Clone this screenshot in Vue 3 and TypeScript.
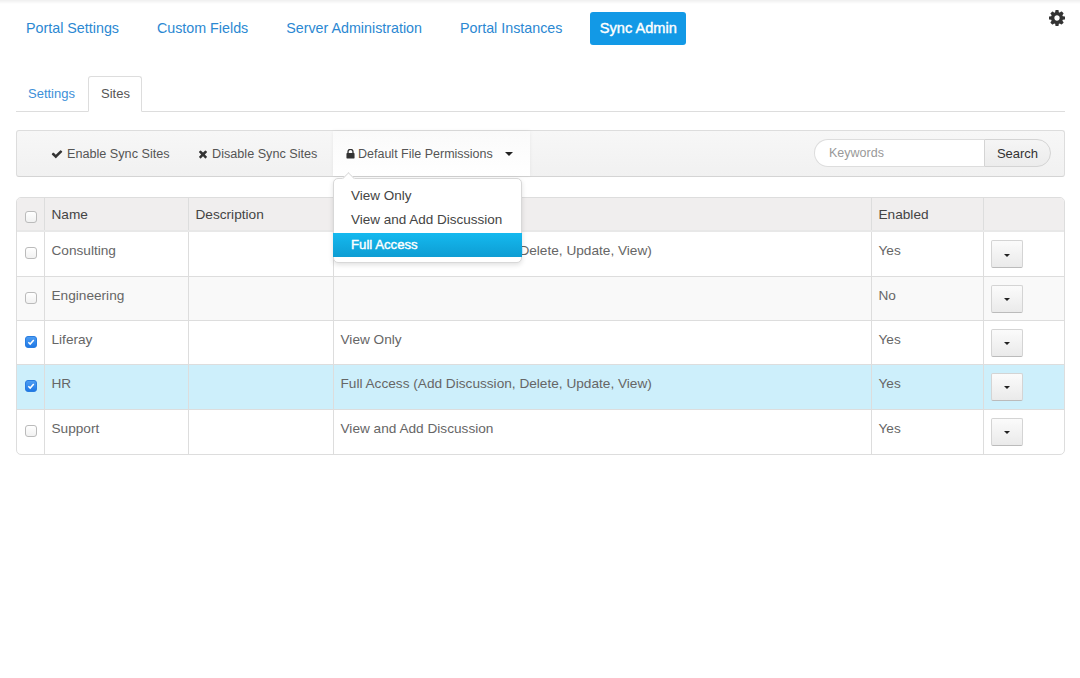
<script setup lang="ts">
const navItems = ['Portal Settings', 'Custom Fields', 'Server Administration', 'Portal Instances', 'Sync Admin']
const rows = [
  { name: 'Consulting', desc: '', perm: 'Full Access (Add Discussion, Delete, Update, View)', enabled: 'Yes', checked: false, cls: 'h45' },
  { name: 'Engineering', desc: '', perm: '', enabled: 'No', checked: false, cls: 'h44 alt' },
  { name: 'Liferay', desc: '', perm: 'View Only', enabled: 'Yes', checked: true, cls: 'h44' },
  { name: 'HR', desc: '', perm: 'Full Access (Add Discussion, Delete, Update, View)', enabled: 'Yes', checked: true, cls: 'h45 hl' },
  { name: 'Support', desc: '', perm: 'View and Add Discussion', enabled: 'Yes', checked: false, cls: 'h45 last' }
]
</script>

<template>
  <div class="page">
    <nav class="nav">
      <a v-for="(n, i) in navItems" :key="n" class="pill" :class="{ active: i === 4 }">{{ n }}</a>
      <svg class="gear" viewBox="0 0 1536 1536" aria-hidden="true">
        <g transform="translate(-128 -128)">
          <path d="M1152 896q0-106-75-181t-181-75-181 75-75 181 75 181 181 75 181-75 75-181zm512-109v222q0 12-8 23t-20 13l-185 28q-19 54-39 91 35 50 107 138 10 12 10 25t-9 23q-27 37-99 108t-94 71q-12 0-26-9l-138-108q-44 23-91 38-16 136-29 186-7 28-36 28h-222q-14 0-24.500-8.500t-11.500-21.500l-28-184q-49-16-90-37l-141 107q-10 9-25 9-14 0-25-11-126-114-165-168-7-10-7-23 0-12 8-23 15-21 51-66.500t54-70.500q-27-50-41-99l-183-27q-13-2-21-12.500t-8-23.500v-222q0-12 8-23t19-13l186-28q14-46 39-92-40-57-107-138-10-12-10-24 0-10 9-23 26-36 98.500-107.500t94.500-71.500q13 0 26 10l138 107q44-23 91-38 16-136 29-186 7-28 36-28h222q14 0 24.500 8.500t11.500 21.500l28 184q49 16 90 37l142-107q9-9 24-9 13 0 25 10 129 119 165 170 7 8 7 22 0 12-8 23-15 21-51 66.500t-54 70.500q26 50 41 98l183 28q13 2 21 12.500t8 23.500z" />
        </g>
      </svg>
    </nav>

    <div class="tabs">
      <a class="tab">Settings</a>
      <a class="tab current">Sites</a>
    </div>

    <div class="toolbar">
      <a class="tool enable">
        <svg class="ico" viewBox="0 0 1792 1792"><path d="M1671 566q0 40-28 68l-724 724-136 136q-28 28-68 28t-68-28l-136-136-362-362q-28-28-28-68t28-68l136-136q28-28 68-28t68 28l294 295 656-657q28-28 68-28t68 28l136 136q28 28 28 68z" /></svg>
        Enable Sync Sites
      </a>
      <a class="tool disable">
        <svg class="ico small" viewBox="0 0 1408 1792"><path d="M1298 1322q0 40-28 68l-136 136q-28 28-68 28t-68-28l-294-294-294 294q-28 28-68 28t-68-28l-136-136q-28-28-28-68t28-68l294-294-294-294q-28-28-28-68t28-68l136-136q28-28 68-28t68 28l294 294 294-294q28-28 68-28t68 28l136 136q28 28 28 68t-28 68l-294 294 294 294q28 28 28 68z" /></svg>
        Disable Sync Sites
      </a>
      <div class="perm-wrap">
        <a class="tool perm">
          <svg class="ico lock" viewBox="256 256 1280 1280"><path d="M640 768h512v-192q0-106-75-181t-181-75-181 75-75 181v192zm832 96v576q0 40-28 68t-68 28h-960q-40 0-68-28t-28-68v-576q0-40 28-68t68-28h32v-192q0-184 132-316t316-132 316 132 132 316v192h32q40 0 68 28t28 68z" /></svg>
          Default File Permissions
          <span class="caret perm-caret"></span>
        </a>
        <div class="menu">
          <span class="notch"></span>
          <a class="mi">View Only</a>
          <a class="mi">View and Add Discussion</a>
          <a class="mi on">Full Access</a>
        </div>
      </div>
      <form class="search" @submit.prevent>
        <input class="kw" type="text" placeholder="Keywords" />
        <button class="go" type="submit">Search</button>
      </form>
    </div>

    <div class="table-wrap">
      <table class="grid">
        <colgroup>
          <col style="width: 27px" />
          <col style="width: 144px" />
          <col style="width: 145px" />
          <col style="width: 538px" />
          <col style="width: 112px" />
          <col />
        </colgroup>
        <thead>
          <tr>
            <th class="cb"><input class="check" type="checkbox" /></th>
            <th>Name</th>
            <th>Description</th>
            <th>Default File Permissions</th>
            <th>Enabled</th>
            <th></th>
          </tr>
        </thead>
        <tbody>
          <tr v-for="r in rows" :key="r.name" :class="r.cls">
            <td class="cb"><input class="check" type="checkbox" :checked="r.checked" /></td>
            <td>{{ r.name }}</td>
            <td>{{ r.desc }}</td>
            <td>{{ r.perm }}</td>
            <td>{{ r.enabled }}</td>
            <td class="act"><button class="drop" type="button"><span class="caret"></span></button></td>
          </tr>
        </tbody>
      </table>
    </div>
  </div>
</template>

<style scoped>
.page {
  height: 678px;
  box-sizing: border-box;
  padding: 12px 15px 0 16px;
  background: linear-gradient(#efefef, #fff 4px);
  font-family: "Liberation Sans", Arial, sans-serif;
  font-size: 13.65px;
  color: #555;
  position: relative;
}
.nav {
  display: flex;
  gap: 17.9px;
  height: 33px;
}
.pill {
  display: block;
  padding: 0 10px;
  font-size: 14.3px;
  line-height: 33px;
  color: #2b88d2;
  border-radius: 3px;
}
.pill.active {
  background: #1299e6;
  color: #fff;
  font-size: 14.6px;
  -webkit-text-stroke: 0.4px #fff;
  padding: 0 9px 0 9px;
  width: 78px;
  white-space: nowrap;
  text-align: center;
}
.gear {
  position: absolute;
  top: 10px;
  left: 1049px;
  width: 16px;
  height: 16px;
  fill: #333;
}
.tabs {
  margin-top: 31px;
  height: 35px;
  border-bottom: 1px solid #ddd;
  display: flex;
  font-size: 13px;
}
.tab {
  display: block;
  padding: 0 12px;
  line-height: 35px;
  color: #3d8fd8;
  margin-right: 1px;
}
.tab.current {
  color: #555;
  border: 1px solid #ddd;
  border-bottom: 1px solid #fff;
  border-radius: 3px 3px 0 0;
  box-sizing: border-box;
  background: #fff;
  width: 54px;
  line-height: 33px;
  height: 36px;
  text-align: center;
}
.toolbar {
  margin-top: 18px;
  height: 47px;
  box-sizing: border-box;
  border: 1px solid #ddd;
  border-bottom-color: #d4d4d4;
  border-radius: 3px;
  background: linear-gradient(#f7f7f7, #f1f1f1);
  display: flex;
  align-items: stretch;
  padding-left: 34px;
  color: #555;
  font-size: 12.65px;
}
.tool {
  display: flex;
  align-items: center;
  white-space: nowrap;
  gap: 4px;
}
.enable { width: 147px; }
.disable { width: 135px; }
.ico {
  width: 12px;
  height: 12px;
  fill: #333;
  flex: none;
}
.ico.small { width: 10px; height: 12px; }
.ico.lock { width: 9px; height: 10px; margin-right: -1px; }
.perm-wrap { position: relative; }
.perm {
  height: 45px;
  width: 197px;
  box-sizing: border-box;
  padding-left: 13px;
  font-size: 12.5px;
  background: linear-gradient(#fafafa, #fff);
  box-shadow: 0 0 4px rgba(0, 0, 0, 0.06);
}
.caret {
  display: inline-block;
  width: 0;
  height: 0;
  border-left: 4px solid transparent;
  border-right: 4px solid transparent;
  border-top: 4px solid #222;
}
.perm-caret { margin-left: 8px; }
.menu {
  position: absolute;
  z-index: 5;
  top: 47px;
  left: 0;
  width: 189px;
  height: 85px;
  box-sizing: border-box;
  padding-top: 6px;
  background: #fff;
  border: 1px solid #d8d8d8;
  border-radius: 5px;
  box-shadow: 0 2px 5px rgba(0, 0, 0, 0.12);
  font-size: 13.5px;
}
.notch {
  position: absolute;
  top: -5px;
  left: 10px;
  width: 8px;
  height: 8px;
  background: #fff;
  border-left: 1px solid #ddd;
  border-top: 1px solid #ddd;
  transform: rotate(45deg);
}
.mi {
  display: block;
  height: 24px;
  padding-left: 17px;
  line-height: 22px;
  color: #444;
  white-space: nowrap;
}
.mi.on {
  margin: 0 -1px;
  padding-left: 18px;
  line-height: 24px;
  font-size: 13.2px;
  background: linear-gradient(#15b9ef, #0d9dd3);
  color: #fff;
  -webkit-text-stroke: 0.4px #fff;
}
.search {
  margin-left: auto;
  margin-right: 13px;
  margin-top: 8px;
  display: flex;
  height: 28px;
}
.kw {
  width: 170px;
  box-sizing: border-box;
  border: 1px solid #ddd;
  border-right: 0;
  border-radius: 14px 0 0 14px;
  padding: 0 0 0 14px;
  font: 12.5px "Liberation Sans", Arial, sans-serif;
  background: #fff;
  color: #555;
  outline: none;
}
.kw::placeholder { color: #999; opacity: 1; }
.go {
  width: 67px;
  box-sizing: border-box;
  border: 1px solid #d4d4d4;
  border-radius: 0 14px 14px 0;
  background: linear-gradient(#f5f5f5, #ececec);
  font: 13px "Liberation Sans", Arial, sans-serif;
  color: #333;
  padding: 0;
}
.table-wrap {
  margin-top: 20px;
  border: 1px solid #ddd;
  border-radius: 5px;
  overflow: hidden;
}
.grid {
  width: 100%;
  table-layout: fixed;
  border-collapse: collapse;
}
th {
  height: 33px;
  box-sizing: border-box;
  background: #f0eeee;
  border-bottom: 2px solid #e8e8e8;
  border-right: 1px solid #ddd;
  font-weight: 400;
  color: #444;
  text-align: left;
  padding: 0 7px;
  vertical-align: middle;
}
td {
  box-sizing: border-box;
  border-right: 1px solid #ddd;
  border-bottom: 1px solid #ddd;
  padding: 10px 7px 0;
  vertical-align: top;
  color: #666;
  line-height: 18px;
}
th:last-child, td:last-child { border-right: 0; }
.h45 td { height: 45px; }
.h44 td { height: 44px; }
.last td { border-bottom: 0; }
.alt td { background: #f9f9f9; }
.hl td { background: #cdeffb; }
th.cb { padding: 6px 0 0 8px; }
td.cb { padding: 15px 0 0 8px; }
.check {
  appearance: none;
  -webkit-appearance: none;
  display: block;
  margin: 0;
  width: 12px;
  height: 12px;
  box-sizing: border-box;
  border: 1px solid #bbb;
  border-radius: 3px;
  background: linear-gradient(#fff, #f1f1f1);
}
.check:checked {
  border: 1px solid #2a7de0;
  background:
    url("data:image/svg+xml,%3Csvg xmlns='http://www.w3.org/2000/svg' viewBox='0 0 12 12'%3E%3Cpath d='M2.800 6.300 5 8.500 9.300 3.500' fill='none' stroke='white' stroke-width='1.800'/%3E%3C/svg%3E") center/100% no-repeat,
    linear-gradient(#4d9df2, #1f78e6);
}
td.act { padding: 8px 0 0 7px; }
.drop {
  display: flex;
  align-items: center;
  justify-content: center;
  width: 32px;
  height: 28px;
  box-sizing: border-box;
  border: 1px solid #d4d4d4;
  border-bottom-color: #bbb;
  border-radius: 2px;
  background: linear-gradient(#fbfbfb, #eaeaea);
  padding: 2px 0 0;
}
.drop .caret {
  border-left-width: 3.5px;
  border-right-width: 3.5px;
  border-top-width: 3.5px;
}
</style>

<style>
html, body { background: #fff; }
</style>
